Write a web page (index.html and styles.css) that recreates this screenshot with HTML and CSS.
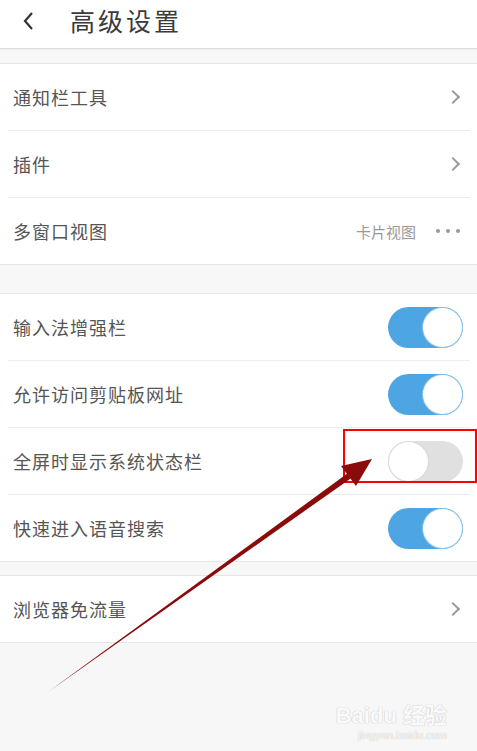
FILE: index.html
```html
<!DOCTYPE html>
<html lang="zh-CN">
<head>
    <meta charset="UTF-8">
    <meta name="viewport" content="width=device-width, initial-scale=1.0">
    <title>高级设置</title>
    <link rel="stylesheet" href="styles.css">
</head>
<body>
    <div id="header">
        <svg class="back-icon" width="12" height="20" viewBox="0 0 12 20">
            <path d="M9 2 L2 10 L9 18" fill="none" stroke="#333" stroke-width="2.2"/>
        </svg>
        <span class="title">高级设置</span>
    </div>

    <div class="group group-first">
        <div class="row">
            <span class="label">通知栏工具</span>
            <span class="chevron"></span>
        </div>
        <div class="row">
            <span class="label">插件</span>
            <span class="chevron"></span>
        </div>
        <div class="row">
            <span class="label">多窗口视图</span>
            <span class="value">卡片视图</span>
            <span class="dots"><i></i><i></i><i></i></span>
        </div>
    </div>

    <div class="group">
        <div class="row">
            <span class="label">输入法增强栏</span>
            <span class="switch switch-on"><span class="knob"></span></span>
        </div>
        <div class="row">
            <span class="label">允许访问剪贴板网址</span>
            <span class="switch switch-on"><span class="knob"></span></span>
        </div>
        <div class="row">
            <span class="label">全屏时显示系统状态栏</span>
            <span class="switch"><span class="knob"></span></span>
        </div>
        <div class="row">
            <span class="label">快速进入语音搜索</span>
            <span class="switch switch-on"><span class="knob"></span></span>
        </div>
    </div>

    <div class="group group-small-gap">
        <div class="row">
            <span class="label">浏览器免流量</span>
            <span class="chevron"></span>
        </div>
    </div>

    <!-- 标注：红框和箭头 -->
    <div class="mark-box"></div>
    <svg class="mark-arrow" width="477" height="751" viewBox="0 0 477 751">
        <polygon points="48,692 350.7,478.4 347.3,473.6" fill="#8b0b0b"/>
        <polygon points="372,459 356,486 341,466" fill="#8b0b0b"/>
    </svg>

    <div class="watermark">
        <div class="wm-main">Bai<span class="wm-paw">du</span> 经验</div>
        <div class="wm-sub">jingyan.baidu.com</div>
    </div>
</body>
</html>
```

FILE: styles.css
```css
:root {
    --text-color: #555;
    --line-color: #e6e6e6;
    --blue: #4ea5e3;
}
body{
    margin: 0;
    width: 477px;
    min-height: 751px;
    background: #f7f7f7;
    font-family: "Noto Sans CJK SC", "Noto Sans", sans-serif;
    color: var(--text-color);
    position: relative;
    overflow: hidden;
}
#header{
    height: 48px;
    background: #fff;
    border-bottom: 1px solid #dedede;
    display: flex;
    align-items: center;
    box-shadow: 0 1px 2px rgba(0,0,0,0.05);
}
.back-icon{
    margin: -6px 0 0 23px;
}
.title{
    margin: -8px 0 0 35px;
    font-size: 25px;
    color: #3a3a3a;
    letter-spacing: 3px;
}
.group{
    margin-top: 28px;
    background: #fff;
    border-top: 1px solid var(--line-color);
}
.group-first{
    margin-top: 14px;
}
.group-small-gap{
    margin-top: 13px;
}
.row{
    height: 66px;
    margin: 0 7px 0 8px;
    padding: 0 7px 0 5px;
    display: flex;
    align-items: center;
    border-bottom: 1px solid #ececec;
}
.row:last-child{
    margin: 0;
    padding: 0 14px 0 13px;
    border-bottom: 1px solid var(--line-color);
}
.label{
    flex: 1;
    font-size: 18px;
    letter-spacing: 1px;
}
.chevron{
    width: 8px;
    height: 8px;
    margin-right: 5px;
    border-top: 2px solid #9a9a9a;
    border-right: 2px solid #9a9a9a;
    transform: rotate(45deg);
}
.value{
    font-size: 15px;
    color: #999;
    margin-right: 20px;
}
.dots{
    display: flex;
    gap: 6px;
    margin-right: 3px;
}
.dots i{
    width: 4px;
    height: 4px;
    border-radius: 50%;
    background: #999;
}
.switch{
    width: 75px;
    height: 41px;
    border-radius: 21px;
    background: #e0e0e0;
    display: flex;
    align-items: center;
    padding: 0 1px;
    box-sizing: border-box;
}
.knob{
    width: 39px;
    height: 39px;
    border-radius: 50%;
    background: #fff;
    box-shadow: 0 0 0 1px #d8d8d8;
}
.switch-on{
    background: var(--blue);
    justify-content: flex-end;
}
.switch-on .knob{
    box-shadow: 0 0 0 1px #8cc4ec;
}
.mark-box{
    position: absolute;
    left: 343px;
    top: 429px;
    width: 130px;
    height: 50px;
    border: 2px solid #f00;
}
.mark-arrow{
    position: absolute;
    left: 0;
    top: 0;
}
.watermark{
    position: absolute;
    right: 30px;
    bottom: 10px;
    color: #fafafa;
    text-shadow: 0 0 1px #c8c8c8, 0 0 1px #c8c8c8;
    font-family: "Liberation Sans", "Noto Sans CJK SC", sans-serif;
    text-align: right;
}
.wm-main{
    font-size: 22px;
    font-weight: bold;
}
.wm-sub{
    font-size: 11px;
}
```
